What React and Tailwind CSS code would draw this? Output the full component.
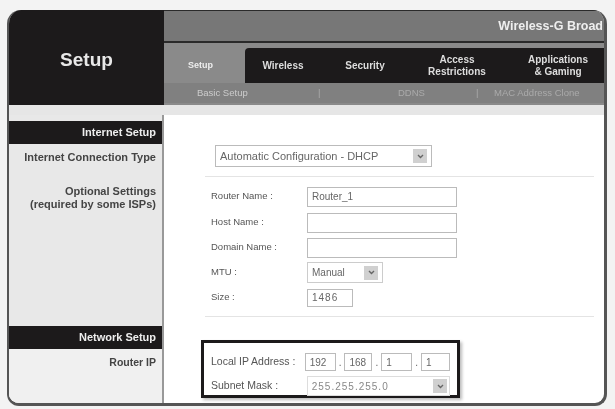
import React from "react";

const tabs = [
  { lines: ["Wireless"], w: "w-[76px]" },
  { lines: ["Security"], w: "w-[88px]" },
  { lines: ["Access", "Restrictions"], w: "w-[96px]" },
  { lines: ["Applications", "& Gaming"], w: "w-[106px]" },
];

const Field = ({ label, children, h = "h-[25px]" }) => (
  <div className={`flex items-center ${h}`}>
    <span className="w-[96px] text-[9.5px] text-[#555]">{label}</span>
    {children}
  </div>
);

const TextBox = ({ w = "w-[150px]", h = "h-[20px]", value, className = "" }) => (
  <div className={`${w} ${h} border border-[#bbb] bg-white px-1 flex items-center text-[10px] text-[#666] ${className}`}>
    {value}
  </div>
);

const Arrow = () => (
  <div className="w-[14px] h-[14px] bg-[#d0d0d0] flex items-center justify-center">
    <svg width="7" height="5" viewBox="0 0 7 5">
      <path d="M1 1l2.5 2.5L6 1" fill="none" stroke="#666" strokeWidth="1.4" />
    </svg>
  </div>
);

const SideHeader = ({ children }) => (
  <div className="h-[23px] bg-[#1c1a1b] flex items-center justify-end pr-[6px] text-[11px] font-bold text-[#eee]">
    {children}
  </div>
);

export default function App() {
  return (
    <div className="w-[615px] h-[409px] overflow-hidden bg-[#f3f3f3] pt-[10px] px-[7px] font-['Liberation_Sans',sans-serif] blur-[0.7px]">
      <div className="w-[600px] h-[396px] rounded-t-[14px] rounded-b-[12px] overflow-hidden bg-white border-r-[3px] border-b-[3px] border-l-2 border-[#555] flex flex-col">
        {/* header */}
        <div className="flex h-[95px] shrink-0">
          <div className="w-[155px] shrink-0 bg-[#1c1a1b] pt-[36px] text-center text-[19px] font-bold text-[#e8e8e8]">
            Setup
          </div>
          <div className="flex-1 min-w-0 flex flex-col bg-[#8a8a8a]">
            <div className="h-[33px] bg-[#777] border-t border-b-[2px] border-[#2a2a2a] flex items-center justify-end overflow-hidden pr-[1px] text-[12.5px] font-bold text-[#eee] whitespace-nowrap">
              Wireless-G Broad
            </div>
            <div className="h-[5px]" />
            <div className="flex h-[35px]">
              <div className="w-[81px] shrink-0 flex items-center pl-[24px] text-[9px] font-bold text-[#eee]">Setup</div>
              <div className="flex-1 min-w-0 bg-[#1c1a1b] flex items-center overflow-hidden rounded-tl-sm">
                {tabs.map((t) => (
                  <div key={t.lines[0]} className={`${t.w} shrink-0 text-center text-[10px] leading-[12px] font-bold text-[#ddd]`}>
                    {t.lines.map((l) => (
                      <div key={l}>{l}</div>
                    ))}
                  </div>
                ))}
              </div>
            </div>
            <div className="h-[20px] bg-[#808080] flex items-center overflow-hidden text-[9.5px] text-[#aaa]">
              <span className="w-[154px] shrink-0 pl-[33px] text-[#ccc]">Basic Setup</span>
              <span className="w-[80px] shrink-0">|</span>
              <span className="w-[78px] shrink-0">DDNS</span>
              <span className="w-[18px] shrink-0">|</span>
              <span className="whitespace-nowrap">MAC Address Clone</span>
            </div>
          </div>
        </div>
        <div className="h-[10px] shrink-0 bg-[#e6e6e6]" />

        <div className="flex flex-1 min-h-0">
          {/* sidebar */}
          <div className="w-[155px] shrink-0 bg-[#e8e8e8] border-r-2 border-[#999] flex flex-col pt-[6px] text-right text-[11px] font-bold text-[#444]">
            <SideHeader>Internet Setup</SideHeader>
            <div className="pr-[6px] pt-[5px] whitespace-nowrap">Internet Connection Type</div>
            <div className="pr-[6px] pt-[19px] leading-[13px] whitespace-nowrap">
              Optional Settings
              <br />
              (required by some ISPs)
            </div>
            <div className="mt-auto">
              <SideHeader>Network Setup</SideHeader>
              <div className="pr-[6px] pt-[6px] h-[54px] bg-[#f0f0f0] text-[10.5px]">Router IP</div>
            </div>
          </div>

          {/* form */}
          <div className="flex-1 min-w-0 flex flex-col pl-[46px] pt-[30px] pr-[10px]">
            <div className="w-[217px] h-[22px] ml-[5px] border border-[#bbb] flex items-center justify-between px-1 text-[11px] text-[#666]">
              <span className="whitespace-nowrap">Automatic Configuration - DHCP</span>
              <Arrow />
            </div>
            <div className="mt-[9px] border-t border-[#e4e4e4] -ml-[5px] pl-[6px] pt-[6px] pb-[6px]">
              <Field label="Router Name :" h="h-[27px]">
                <TextBox value="Router_1" />
              </Field>
              <Field label="Host Name :">
                <TextBox />
              </Field>
              <Field label="Domain Name :">
                <TextBox />
              </Field>
              <Field label="MTU :">
                <div className="w-[76px] h-[21px] border border-[#ccc] flex items-center justify-between px-1 text-[10px] text-[#666]">
                  Manual
                  <Arrow />
                </div>
              </Field>
              <Field label="Size :">
                <TextBox w="w-[46px]" h="h-[18px]" value="1486" className="tracking-[1px]" />
              </Field>
            </div>
            <div className="border-t border-[#e4e4e4] -ml-[5px]" />
            <div className="mt-[23px] -ml-[9px] w-[259px] h-[58px] border-[3px] border-[#1c1a1b] px-[7px] pt-[10px] shadow-[2px_2px_3px_#bbb]">
              <div className="flex items-center h-[18px]">
                <span className="w-[97px] text-[10.5px] text-[#555] whitespace-nowrap">Local IP Address :</span>
                <div className="flex items-center gap-[3px] text-[10px] text-[#666]">
                  <TextBox w="w-[31px]" h="h-[18px]" value="192" />
                  <span>.</span>
                  <TextBox w="w-[28px]" h="h-[18px]" value="168" />
                  <span>.</span>
                  <TextBox w="w-[31px]" h="h-[18px]" value="1" />
                  <span>.</span>
                  <TextBox w="w-[29px]" h="h-[18px]" value="1" />
                </div>
              </div>
              <div className="flex items-center h-[20px] mt-[5px]">
                <span className="w-[97px] text-[10.5px] text-[#555]">Subnet Mask :</span>
                <div className="w-[145px] h-[20px] border border-[#ddd] bg-white flex items-center justify-between pl-1 pr-[2px] text-[10px] tracking-[1px] text-[#888]">
                  255.255.255.0
                  <Arrow />
                </div>
              </div>
            </div>
          </div>
        </div>
      </div>
    </div>
  );
}
